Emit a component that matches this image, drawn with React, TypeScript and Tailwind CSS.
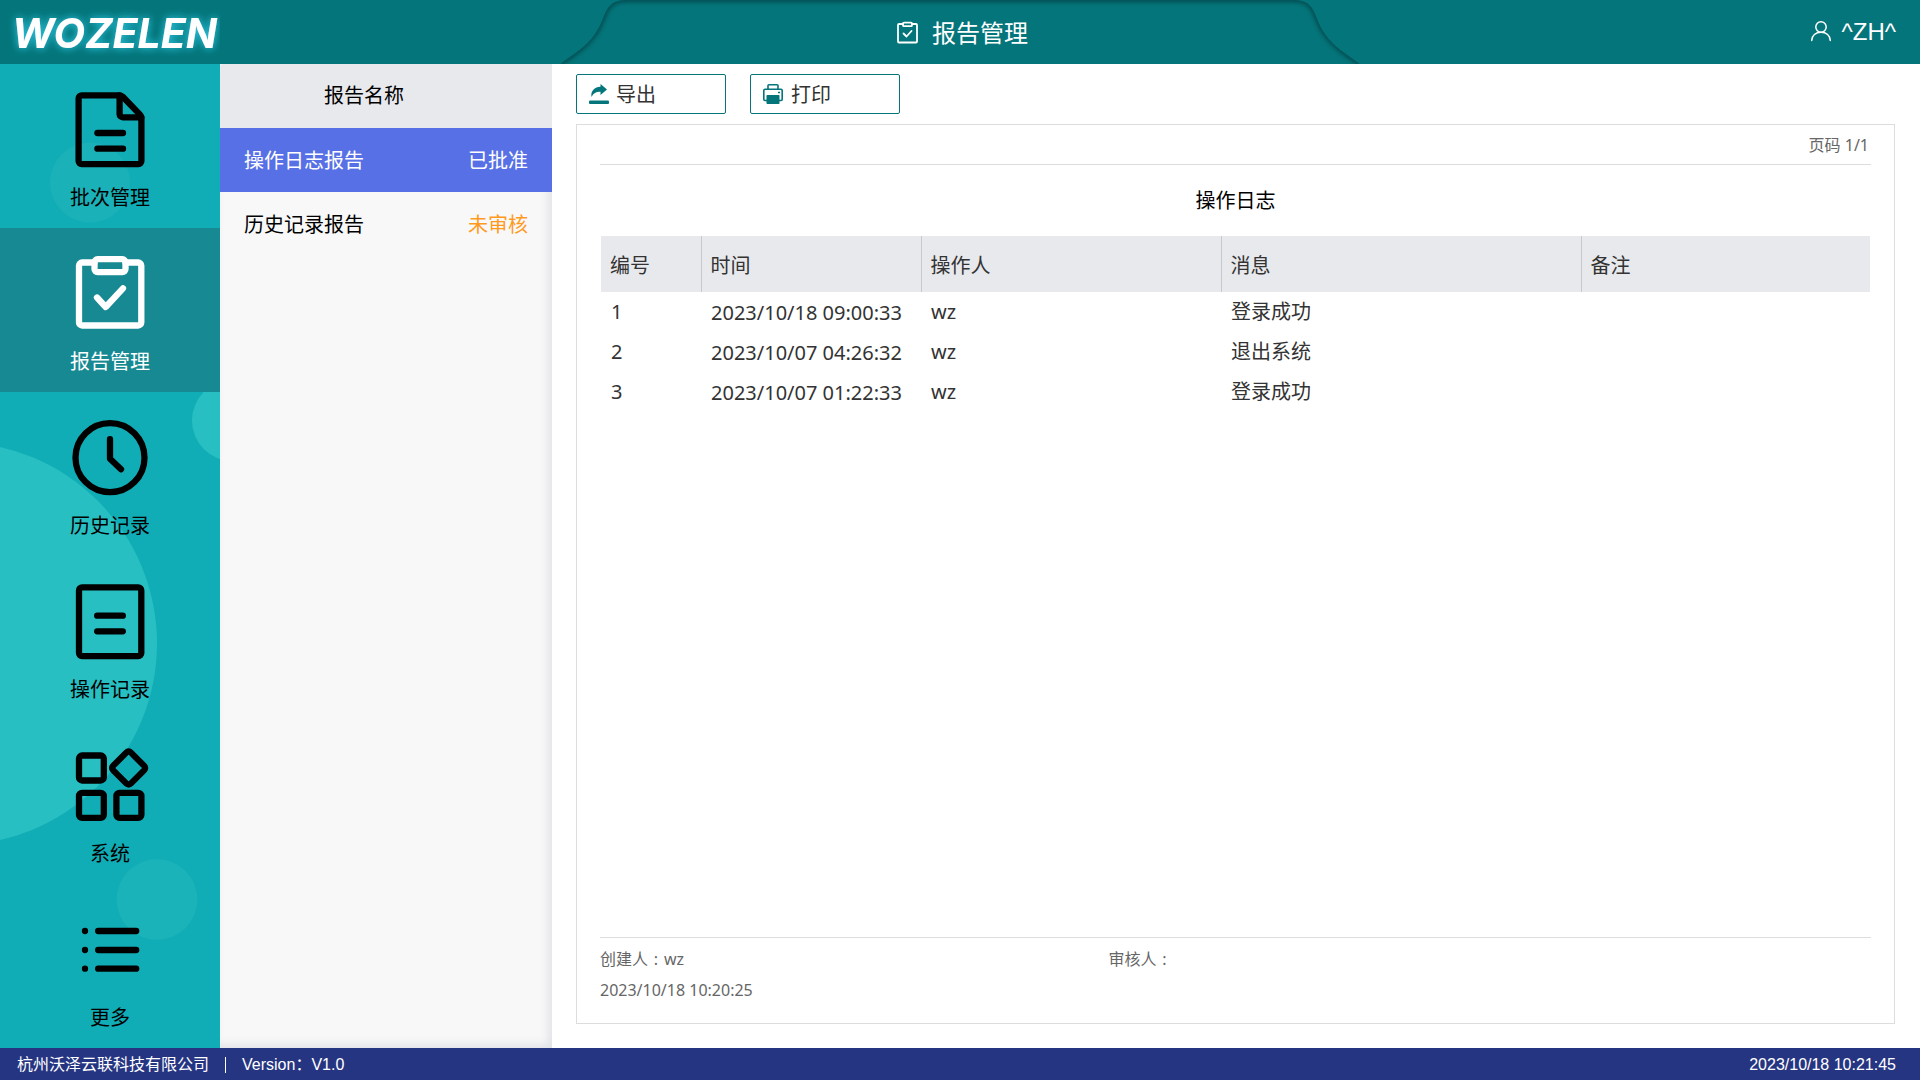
import React, { useState } from "react";

const menus = [
  { key: "batch", name: "批次管理" },
  { key: "report", name: "报告管理" },
  { key: "history", name: "历史记录" },
  { key: "operation", name: "操作记录" },
  { key: "system", name: "系统" },
  { key: "more", name: "更多" },
];

const reports = [
  { id: 1, name: "操作日志报告", status: "已批准", approved: true },
  { id: 2, name: "历史记录报告", status: "未审核", approved: false },
];

const logs = [
  { id: 1, time: "2023/10/18 09:00:33", user: "wz", message: "登录成功" },
  { id: 2, time: "2023/10/07 04:26:32", user: "wz", message: "退出系统" },
  { id: 3, time: "2023/10/07 01:22:33", user: "wz", message: "登录成功" },
];

function Logo() {
  return (
    <svg
      viewBox="0 0 220 64"
      className="h-16 w-[220px] shrink-0"
      role="img"
      aria-label="WOZELEN"
    >
      <defs>
        <filter id="glow" x="-10%" y="-50%" width="120%" height="200%">
          <feDropShadow
            dx="0"
            dy="0"
            stdDeviation="4"
            floodColor="#2fd0ee"
            floodOpacity="1"
          />
        </filter>
      </defs>
      <text
        x="12"
        y="48"
        fill="#fff"
        fontSize="41"
        fontWeight="700"
        fontStyle="italic"
        fontFamily="Inter, 'Liberation Sans', sans-serif"
        filter="url(#glow)"
      >
        WOZELEN
      </text>
    </svg>
  );
}

function MenuIcon({ name }: { name: string }) {
  return (
    <svg
      viewBox="0 0 80 80"
      className="size-20"
      fill="none"
      stroke="currentColor"
      strokeWidth="6.3"
      strokeLinecap="round"
      strokeLinejoin="round"
      aria-hidden="true"
    >
      {name === "batch" && (
        <>
          <path d="M11.7 5.4H49.6Q51.5 5.4 53 7L70 24.6Q71.4 26 71.4 28V71a3.1 3.1 0 0 1-3.1 3.1H11.7A3.1 3.1 0 0 1 8.6 71V8.5a3.1 3.1 0 0 1 3.1-3.1Z" />
          <path d="M49.6 5.4V24.2a3.1 3.1 0 0 0 3.1 3.1H71.4" />
          <path d="M27.4 43H53M27.4 58.7H53" />
        </>
      )}
      {name === "report" && (
        <>
          <path d="M24.5 8.5H12.1a3.1 3.1 0 0 0-3.1 3.1V68.4a3.1 3.1 0 0 0 3.1 3.1H68.2a3.1 3.1 0 0 0 3.1-3.1V11.6a3.1 3.1 0 0 0-3.1-3.1H55.5" />
          <rect x="24.5" y="5.2" width="31" height="13" rx="3.1" />
          <path d="M27 43.5 35.7 53 53 34.3" />
        </>
      )}
      {name === "history" && (
        <>
          <circle cx="40" cy="39.7" r="34.5" />
          <path d="M40 21.2V40.7L51 51.3" />
        </>
      )}
      {name === "operation" && (
        <>
          <rect x="9" y="5.4" width="62.3" height="68.8" rx="3.1" />
          <path d="M27.2 33.7H52.8M27.2 49.3H52.8" />
        </>
      )}
      {name === "system" && (
        <>
          <rect x="9" y="9.5" width="24.8" height="25" rx="3.1" />
          <rect x="9" y="46.9" width="24.8" height="25" rx="3.1" />
          <rect x="46.4" y="46.9" width="25" height="25" rx="3.1" />
          <rect
            x="46.1"
            y="9.5"
            width="25.1"
            height="25.1"
            rx="3"
            transform="rotate(45 58.7 22)"
          />
        </>
      )}
      {name === "more" && (
        <>
          <path d="M28.2 21H66.2M28.2 40H66.2M28.2 58.7H66.2" />
          <path d="M15 21h.01M15 40h.01M15 58.7h.01" />
        </>
      )}
    </svg>
  );
}

function Header() {
  return (
    <header className="relative flex h-16 items-center justify-between bg-[#04757a] text-white">
      <Logo />
      <div className="absolute inset-y-0 left-1/2 w-[800px] -translate-x-1/2">
        <svg viewBox="0 0 800 64" className="h-16 w-[800px]" aria-hidden="true">
          <defs>
            <clipPath id="tab">
              <path d="M0 64C14 54 27 46 35 34C47 17 43 1 65 0H735C757 1 753 17 765 34C773 46 786 54 800 64Z" />
            </clipPath>
            <filter id="soft" x="-5%" y="-20%" width="110%" height="140%">
              <feGaussianBlur stdDeviation="2" />
            </filter>
          </defs>
          <g clipPath="url(#tab)">
            <path
              d="M0 64C14 54 27 46 35 34C47 17 43 1 65 0H735C757 1 753 17 765 34C773 46 786 54 800 64"
              fill="none"
              stroke="#034448"
              strokeWidth="4"
              filter="url(#soft)"
            />
          </g>
        </svg>
      </div>
      <h1 className="absolute left-1/2 flex -translate-x-1/2 items-center gap-3 pt-0.5 pl-1 text-2xl">
        <svg
          viewBox="0 0 24 24"
          className="size-6"
          fill="none"
          stroke="currentColor"
          strokeWidth="1.8"
          strokeLinejoin="round"
          strokeLinecap="round"
          aria-hidden="true"
        >
          <path d="M7 3H3a1 1 0 0 0-1 1V20.500a1 1 0 0 0 1 1H20a1 1 0 0 0 1-1V4a1 1 0 0 0-1-1H16" />
          <rect x="7" y="1.6" width="9" height="3.6" rx="1" />
          <path d="M7.5 12.500 10.500 15.500 15.500 10" />
        </svg>
        报告管理
      </h1>
      <button className="flex items-center gap-2 pr-6 text-2xl">
        <svg
          viewBox="0 0 24 24"
          className="size-6"
          fill="none"
          stroke="currentColor"
          strokeWidth="1.5"
          strokeLinecap="round"
          aria-hidden="true"
        >
          <circle cx="12" cy="7" r="5.2" />
          <path d="M2.7 20.5C2.7 15.5 6.8 12.2 12 12.2S21.3 15.5 21.3 20.5" />
        </svg>
        <span className="font-['Liberation_Sans',sans-serif]">^ZH^</span>
      </button>
    </header>
  );
}

function App() {
  const [menu, setMenu] = useState("report");
  const [selected, setSelected] = useState(1);

  return (
    <div className="flex min-h-screen flex-col bg-white font-['Noto_Sans','Noto_Sans_CJK_SC',sans-serif] text-xl text-black">
      <Header />

      <div className="flex flex-1">
        <nav className="relative w-[220px] shrink-0 overflow-hidden bg-[#11adb6]">
          <svg
            viewBox="0 0 220 984"
            preserveAspectRatio="xMidYMid slice"
            className="absolute inset-0 h-full w-full"
            aria-hidden="true"
          >
            <circle cx="90" cy="118.5" r="40" fill="#1ab1b8" />
            <circle cx="232.7" cy="356.5" r="40.7" fill="#27bfc2" />
            <circle cx="-44.5" cy="579.5" r="201.5" fill="#27bfc2" />
            <circle cx="157" cy="835.5" r="40.4" fill="#1ab3b9" />
          </svg>
          <ul className="relative">
            {menus.map((item) => (
              <li key={item.key}>
                <button
                  onClick={() => setMenu(item.key)}
                  className={
                    menu === item.key
                      ? "flex h-[164px] w-full flex-col items-center gap-3.5 bg-[#178992] pt-[26px] leading-7 text-white"
                      : "flex h-[164px] w-full flex-col items-center gap-3.5 pt-[26px] leading-7"
                  }
                >
                  <MenuIcon name={item.key} />
                  {item.name}
                </button>
              </li>
            ))}
          </ul>
        </nav>

        <section className="w-[332px] shrink-0 bg-[#f8f8f8] shadow-[inset_-4px_-4px_8px_#e1e2e8]">
          <h2 className="flex h-16 items-center justify-center rounded-tl bg-[#e8e9ed] pr-11">
            报告名称
          </h2>
          <ul>
            {reports.map((report) => (
              <li key={report.id}>
                <button
                  onClick={() => setSelected(report.id)}
                  className={
                    selected === report.id
                      ? "flex h-16 w-full items-center justify-between bg-[#5870e6] px-6 pt-0.5 text-white"
                      : "flex h-16 w-full items-center justify-between px-6 pt-0.5"
                  }
                >
                  <span>{report.name}</span>
                  <span className={report.approved ? "" : "text-[#ff9a1f]"}>
                    {report.status}
                  </span>
                </button>
              </li>
            ))}
          </ul>
        </section>

        <main className="flex flex-1 flex-col pt-[10px] pr-[25px] pb-6 pl-6">
          <div className="flex gap-6">
            <button className="flex h-10 w-[150px] items-center gap-[7px] rounded-xs border border-[#04757a] px-3 text-[#333]">
              <svg
                viewBox="0 0 20 20"
                className="size-5"
                fill="#04757a"
                aria-hidden="true"
              >
                <path d="M11.5 0 18 5.5 11.5 11V7.8C7.5 7.5 4.5 9 2.5 13 1.5 7 5.5 3 11.5 2.8Z" />
                <rect x="0" y="16.5" width="20" height="3.5" rx="1" />
              </svg>
              <span className="pt-0.5">导出</span>
            </button>
            <button className="flex h-10 w-[150px] items-center gap-2 rounded-xs border border-[#04757a] px-3 text-[#333]">
              <svg
                viewBox="0 0 20 20"
                className="size-5"
                fill="none"
                stroke="#04757a"
                strokeWidth="1.6"
                strokeLinejoin="round"
                aria-hidden="true"
              >
                <path d="M5 5V1.8A1 1 0 0 1 6 .8H14A1 1 0 0 1 15 1.8V5" />
                <path d="M4 16.5H2A1.2 1.2 0 0 1 .8 15.3V6.5A1.2 1.2 0 0 1 2 5.3H18A1.2 1.2 0 0 1 19.2 6.5V15.3A1.2 1.2 0 0 1 18 16.5H16" />
                <rect
                  x="4.3"
                  y="11.8"
                  width="11.4"
                  height="7.4"
                  fill="#04757a"
                />
                <path d="M15 8.5h2" />
              </svg>
              <span className="pt-0.5">打印</span>
            </button>
          </div>

          <article className="mt-[10px] flex flex-1 flex-col border border-[#ddd] px-[23px]">
            <div className="flex h-10 items-center justify-end border-b border-[#ddd] pr-0.5 text-base text-[#666]">
              页码 1/1
            </div>
            <h2 className="flex h-[71px] items-center justify-center">
              操作日志
            </h2>
            <div className="px-px">
              <table className="w-full table-fixed text-left text-[#333]">
                <thead>
                  <tr className="h-14 bg-[#e8e9ed]">
                    <th className="w-[100px] border-r border-[#c8c9cc] px-[9px] pt-1 font-normal">
                      编号
                    </th>
                    <th className="w-[220px] border-r border-[#c8c9cc] px-[9px] pt-1 font-normal">
                      时间
                    </th>
                    <th className="w-[300px] border-r border-[#c8c9cc] px-[9px] pt-1 font-normal">
                      操作人
                    </th>
                    <th className="w-[360px] border-r border-[#c8c9cc] px-[9px] pt-1 font-normal">
                      消息
                    </th>
                    <th className="px-[9px] pt-1 font-normal">备注</th>
                  </tr>
                </thead>
                <tbody>
                  {logs.map((log) => (
                    <tr key={log.id} className="h-10">
                      <td className="px-[10px]">{log.id}</td>
                      <td className="px-[10px] pt-0.5 whitespace-nowrap">
                        {log.time}
                      </td>
                      <td className="px-[10px]">{log.user}</td>
                      <td className="px-[10px]">{log.message}</td>
                      <td className="px-[10px]"></td>
                    </tr>
                  ))}
                </tbody>
              </table>
            </div>
            <footer className="mt-auto grid h-[86px] grid-cols-5 content-start gap-y-[7px] border-t border-[#ddd] pt-[9px] text-base leading-6 text-[#666]">
              <span className="col-span-2">
                创建人
                <span className="inline-block w-4 text-center">:</span>
                wz
              </span>
              <span className="col-span-3">
                审核人
                <span className="inline-block w-4 text-center">:</span>
              </span>
              <span className="col-span-5">2023/10/18 10:20:25</span>
            </footer>
          </article>
        </main>
      </div>

      <footer className="flex h-8 items-center justify-between bg-[#263581] pt-px pr-6 pl-[17px] font-['Liberation_Sans','Noto_Sans_CJK_SC',sans-serif] text-base text-white">
        <div className="flex items-center gap-4">
          <span>杭州沃泽云联科技有限公司</span>
          <span className="h-4 w-px bg-white"></span>
          <span>Version：V1.0</span>
        </div>
        <time>2023/10/18 10:21:45</time>
      </footer>
    </div>
  );
}

export default App;
